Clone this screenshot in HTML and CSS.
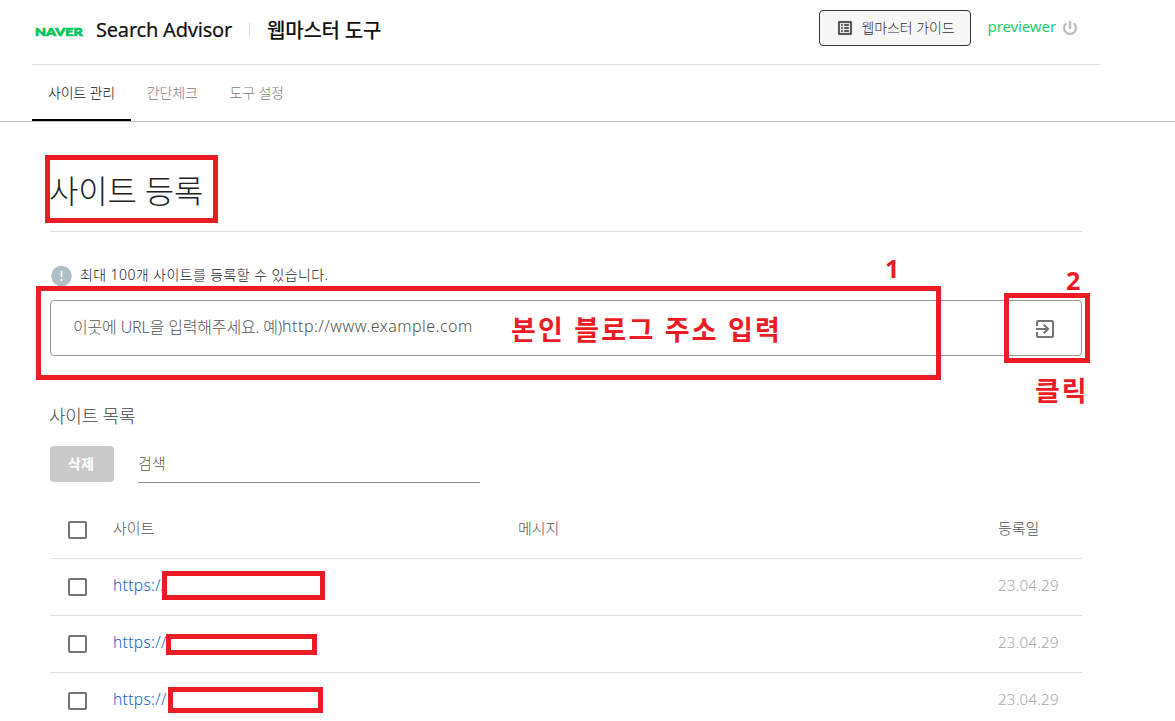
FILE: index.html
```html
<!DOCTYPE html>
<html lang="ko">
<head>
    <meta charset="UTF-8">
    <meta name="viewport" content="width=device-width, initial-scale=1.0">
    <title>사이트 등록</title>
    <link rel="stylesheet" href="styles.css">
</head>
<body>
    <header class="header">
        <div class="header-top">
            <span class="logo">NAVER</span>
            <span class="brand">Search Advisor</span>
            <span class="divider"></span>
            <span class="tool-name">웹마스터 도구</span>
            <button class="guide" type="button">
                <svg width="18" height="18" viewBox="0 0 24 24" fill="#333"><path d="M11 7h6v2h-6zm0 4h6v2h-6zm0 4h6v2h-6zM7 7h2v2H7zm0 4h2v2H7zm0 4h2v2H7zM20.1 3H3.9c-.5 0-.9.4-.9.9v16.2c0 .4.4.9.9.9h16.200c.4 0 .9-.5.9-.9V3.900c0-.5-.5-.9-.9-.9zM19 19H5V5h14z" stroke="#333" stroke-width=".3"/></svg>
                <span>웹마스터 가이드</span>
            </button>
            <span class="user">previewer</span>
            <svg class="power" width="18" height="18" viewBox="0 0 24 24" fill="#b5b5b5"><path d="M13 3h-2v10h2zm4.830 2.170l-1.420 1.420A6.920 6.920 0 0 1 19 12c0 3.870-3.130 7-7 7A6.995 6.995 0 0 1 7.580 6.580L6.170 5.170A8.932 8.932 0 0 0 3 12a9 9 0 0 0 18 0c0-2.740-1.230-5.180-3.170-6.830z" stroke="#b5b5b5" stroke-width=".8"/></svg>
        </div>
        <nav class="tabs">
            <a class="tab active">사이트 관리</a>
            <a class="tab">간단체크</a>
            <a class="tab">도구 설정</a>
        </nav>
    </header>

    <main class="main">
        <h1 class="title">사이트 등록</h1>
        <p class="notice">
            <svg width="22" height="22" viewBox="0 0 22 22"><circle cx="11.500" cy="11" r="10.300" fill="#b0bec5"/><path d="M11.500 6v6M11.500 14v2" stroke="#fff" stroke-width="1.600"/></svg>
            <span>최대 100개 사이트를 등록할 수 있습니다.</span>
        </p>
        <div class="url-field">
            <span class="placeholder">이곳에 URL을 입력해주세요. 예)</span><span class="example">http://www.example.com</span>
            <svg width="24" height="24" viewBox="0 0 24 24" fill="#757575"><path d="M10.090 15.590L11.500 17l5-5-5-5-1.410 1.410L12.670 11H3v2h9.670zM19 3H5a2 2 0 0 0-2 2v4h2V5h14v14H5v-4H3v4a2 2 0 0 0 2 2h14c1.100 0 2-.9 2-2V5c0-1.100-.9-2-2-2z"/></svg>
        </div>
        <h2 class="subtitle">사이트 목록</h2>
        <div class="tools">
            <button class="delete" type="button">삭제</button>
            <div class="search">검색</div>
        </div>
        <div class="list">
            <div class="row head">
                <span class="check"></span>
                <span class="site">사이트</span>
                <span class="message">메시지</span>
                <span class="date">등록일</span>
            </div>
            <div class="row">
                <span class="check"></span>
                <a class="site link">https://</a>
                <span class="message"></span>
                <span class="date">23.04.29</span>
            </div>
            <div class="row">
                <span class="check"></span>
                <a class="site link">https://</a>
                <span class="message"></span>
                <span class="date">23.04.29</span>
            </div>
            <div class="row">
                <span class="check"></span>
                <a class="site link">https://</a>
                <span class="message"></span>
                <span class="date">23.04.29</span>
            </div>
        </div>
    </main>

    <!-- red guide marks over the page -->
    <div class="mark mark-title"></div>
    <div class="mark mark-url"></div>
    <div class="mark mark-submit"></div>
    <div class="mark mask mask-1"></div>
    <div class="mark mask mask-2"></div>
    <div class="mark mask mask-3"></div>
    <span class="note note-1">1</span>
    <span class="note note-2">2</span>
    <span class="note note-url">본인 블로그 주소 입력</span>
    <span class="note note-click">클릭</span>
</body>
</html>
```
FILE: styles.css
```css
* {
    box-sizing: border-box;
}
body {
    position: relative;
    margin: 0;
    height: 721px;
    overflow: hidden;
    background: #fff;
    color: #333;
    font-family: "Noto Sans", "Noto Sans CJK KR", sans-serif;
    font-size: 14px;
    font-weight: 300;
    white-space: nowrap;
}
.header {
    height: 122px;
    border-bottom: 1px solid #c2c2c2;
}
.header-top {
    display: flex;
    align-items: center;
    width: 1068px;
    height: 65px;
    margin-left: 32px;
    padding: 0 21px 5px 3px;
    border-bottom: 1px solid #e0e0e0;
}
.logo {
    width: 61px;
    padding-top: 3px;
    color: #03c75a;
    font-family: Lato, sans-serif;
    font-size: 12px;
    font-weight: 900;
    -webkit-text-stroke: 0.7px #03c75a;
    transform: scaleX(1.19);
    transform-origin: left;
}
.brand {
    width: 153px;
    color: #111;
    font-size: 20px;
    font-weight: 400;
    letter-spacing: -0.2px;
    -webkit-text-stroke: 0.2px #111;
}
.divider {
    width: 1px;
    height: 14px;
    margin-right: 17px;
    background: #ddd;
}
.tool-name {
    color: #111;
    font-size: 20px;
    font-weight: 500;
    letter-spacing: -0.2px;
}
.guide {
    display: flex;
    align-items: center;
    gap: 8px;
    width: 152px;
    height: 36px;
    margin: 0 17px 4px auto;
    padding: 0 0 0 16px;
    border: 1px solid #333;
    border-radius: 4px;
    background: #f7f7f7;
    color: #333;
    font: inherit;
    letter-spacing: -0.1px;
}
.guide span {
    padding-bottom: 2px;
}
.user {
    margin-right: 5px;
    padding-bottom: 7px;
    color: #1ecb68;
    font-size: 15px;
    font-weight: 400;
    letter-spacing: -0.1px;
}
.power {
    margin-bottom: 4px;
}
.tabs {
    display: flex;
    height: 56px;
    margin-left: 32px;
}
.tab {
    padding: 17px 16px 0;
    color: #808080;
    font-size: 14px;
    letter-spacing: -0.2px;
}
.tab.active {
    color: #111;
    border-bottom: 2px solid #000;
}
.main {
    width: 1032px;
    margin-left: 50px;
}
.title {
    height: 110px;
    margin: 0;
    padding-top: 46px;
    border-bottom: 1px solid #e0e0e0;
    color: #222;
    font-size: 32px;
    font-weight: 300;
    letter-spacing: -0.2px;
    line-height: 46px;
    text-indent: -1px;
}
.notice {
    display: flex;
    align-items: center;
    gap: 8px;
    height: 24px;
    margin: 32px 0 12px;
    color: #222;
    letter-spacing: 0.4px;
}
.notice span {
    padding-bottom: 4px;
}
.url-field {
    display: flex;
    align-items: center;
    height: 56px;
    padding: 0 24px 4px 22px;
    border: 1px solid #9a9a9a;
    border-radius: 4px;
    color: #555;
    font-size: 16px;
}
.placeholder {
    letter-spacing: -0.16px;
}
.example {
    letter-spacing: 0.46px;
}
.url-field svg {
    margin: 5px 0 0 auto;
}
.subtitle {
    height: 30px;
    margin: 45px 0 15px;
    color: #444;
    font-size: 18px;
    font-weight: 300;
    letter-spacing: -0.2px;
    line-height: 30px;
    text-indent: -1px;
}
.tools {
    display: flex;
    gap: 24px;
    height: 37px;
}
.delete {
    width: 64px;
    height: 36px;
    padding: 0 2px 2px 0;
    border: 0;
    border-radius: 4px;
    background: #cacaca;
    color: #fff;
    font: inherit;
    font-weight: 700;
}
.search {
    width: 342px;
    border-bottom: 1px solid #8f8f8f;
    color: #555;
    font-size: 15px;
    line-height: 35px;
}
.list {
    margin-top: 18px;
}
.row {
    display: grid;
    grid-template-columns: 45px 405px 480px auto;
    align-items: center;
    height: 57px;
    padding-left: 18px;
    border-bottom: 1px solid #e0e0e0;
    line-height: 20px;
}
.row.head {
    height: 58px;
    color: #555;
    font-size: 15px;
    letter-spacing: -0.1px;
}
.check {
    width: 19px;
    height: 18px;
    border: 2px solid #757575;
    border-radius: 2px;
}
.site,
.message,
.date {
    padding-bottom: 3px;
}
.link {
    padding-bottom: 5px;
    color: #1565c0;
    font-size: 15.5px;
    letter-spacing: 0.35px;
}
.row:not(.head) .date {
    padding-bottom: 4px;
    color: #a8a8a8;
    font-size: 15px;
    letter-spacing: 0.25px;
}
.mark {
    position: absolute;
    border: 5px solid #ed1c24;
}
.mark-title {
    left: 45px;
    top: 155px;
    width: 173px;
    height: 68px;
}
.mark-url {
    left: 36px;
    top: 286px;
    width: 905px;
    height: 94px;
}
.mark-submit {
    left: 1004px;
    top: 293px;
    width: 86px;
    height: 70px;
}
.mask {
    background: #fff;
}
.mask-1 {
    left: 162px;
    top: 571px;
    width: 163px;
    height: 29px;
}
.mask-2 {
    left: 166px;
    top: 634px;
    width: 151px;
    height: 21px;
}
.mask-3 {
    left: 168px;
    top: 687px;
    width: 155px;
    height: 26px;
}
.note {
    position: absolute;
    color: #ed1c24;
    font-size: 27px;
    font-weight: 700;
    line-height: 36px;
}
.note-1,
.note-2 {
    font-family: "Open Sans", sans-serif;
    font-size: 25px;
}
.note-1 {
    left: 885px;
    top: 250px;
}
.note-2 {
    left: 1066px;
    top: 262px;
}
.note-url {
    left: 511px;
    top: 312px;
    letter-spacing: 2.2px;
}
.note-click {
    left: 1035px;
    top: 373px;
    letter-spacing: 2px;
}
```
